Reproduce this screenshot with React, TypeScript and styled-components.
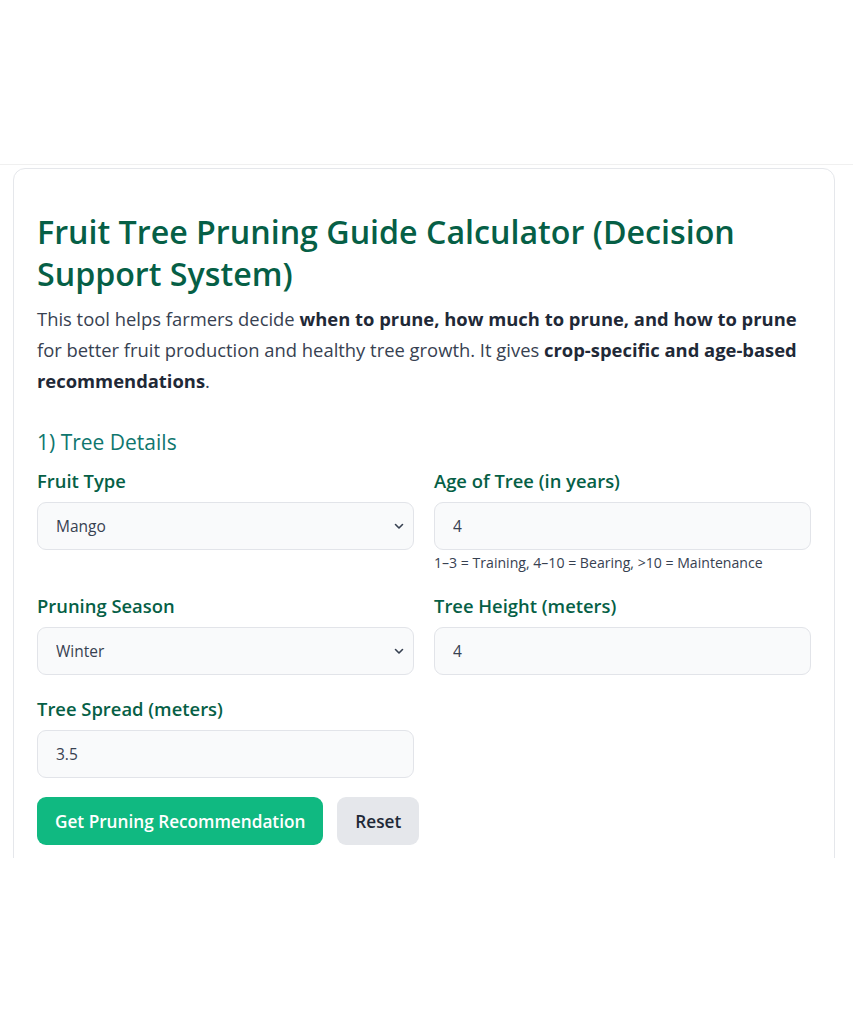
import styled, { createGlobalStyle } from "styled-components";

const GlobalStyle = createGlobalStyle`
  * { box-sizing: border-box; }
  body {
    margin: 0;
    background: #ffffff;
    font-family: "Open Sans", "Noto Sans", Arial, sans-serif;
    color: #374151;
  }
`;

const TopSpace = styled.div`
  height: 164px;
`;

const Frame = styled.div`
  height: 694px;
  overflow: hidden;
  border-top: 1px solid #f0f0f0;
  padding: 3px 18px 0 13px;
`;

const Card = styled.div`
  width: 822px;
  min-height: 760px;
  border: 1px solid #e5e7eb;
  border-radius: 12px;
  padding: 42px 23px 24px;
`;

const Title = styled.h1`
  margin: 0 0 8px;
  font-size: 32.2px;
  line-height: 42px;
  font-weight: 600;
  color: #065f46;
`;

const Intro = styled.p`
  margin: 0 0 31px;
  font-size: 18.4px;
  line-height: 31px;
  color: #374151;

  strong {
    font-weight: 700;
    color: #1f2937;
  }
`;

const SectionTitle = styled.h2`
  margin: 0 0 12px;
  font-size: 21px;
  line-height: 30px;
  font-weight: 400;
  color: #0f766e;
`;

const Grid = styled.div`
  display: grid;
  grid-template-columns: 1fr 1fr;
  column-gap: 20px;
  row-gap: 22px;
`;

const Field = styled.div`
  display: flex;
  flex-direction: column;
`;

const Label = styled.label`
  font-size: 18.4px;
  line-height: 24px;
  font-weight: 600;
  color: #065f46;
  margin-bottom: 9px;
`;

const controlStyles = `
  width: 100%;
  height: 48px;
  border: 1px solid #e2e4e9;
  border-radius: 9px;
  background: #f9fafb;
  font-family: "Open Sans", "Noto Sans", Arial, sans-serif;
  font-size: 15.5px;
  color: #374151;
  padding: 0 18px;
  outline: none;
`;

const Input = styled.input`
  ${controlStyles}
`;

const SelectWrap = styled.div`
  position: relative;
`;

const Select = styled.select`
  ${controlStyles}
  appearance: none;
  padding-right: 36px;
`;

const Chevron = styled.svg`
  position: absolute;
  right: 9px;
  top: 50%;
  transform: translateY(-50%);
  pointer-events: none;
`;

const Hint = styled.small`
  margin-top: 4px;
  font-size: 14.1px;
  line-height: 18px;
  color: #374151;
`;

const Actions = styled.div`
  display: flex;
  gap: 14px;
  margin-top: 19px;
`;

const Button = styled.button<{ $variant?: "primary" | "secondary" }>`
  height: 48px;
  padding: 0 18px;
  border: none;
  border-radius: 9px;
  font-family: "Open Sans", "Noto Sans", Arial, sans-serif;
  font-size: 17.2px;
  font-weight: 600;
  cursor: pointer;
  background: ${(p) => (p.$variant === "secondary" ? "#e5e7eb" : "#10b981")};
  color: ${(p) => (p.$variant === "secondary" ? "#1f2937" : "#ffffff")};
`;

const ChevronIcon = () => (
  <Chevron width="12" height="12" viewBox="0 0 12 12">
    <path d="M2.5 4.5 L6 8 L9.5 4.5" fill="none" stroke="#374151" strokeWidth="1.6" strokeLinecap="round" strokeLinejoin="round" />
  </Chevron>
);

export default function App() {
  return (
    <>
      <GlobalStyle />
      <TopSpace />
      <Frame>
        <Card>
          <Title>Fruit Tree Pruning Guide Calculator (Decision Support System)</Title>
          <Intro>
            This tool helps farmers decide <strong>when to prune, how much to prune, and how to prune</strong> for
            better fruit production and healthy tree growth. It gives <strong>crop-specific and age-based
            recommendations</strong>.
          </Intro>
          <SectionTitle>1) Tree Details</SectionTitle>
          <Grid>
            <Field>
              <Label>Fruit Type</Label>
              <SelectWrap>
                <Select defaultValue="Mango">
                  <option>Mango</option>
                  <option>Apple</option>
                  <option>Guava</option>
                  <option>Citrus</option>
                </Select>
                <ChevronIcon />
              </SelectWrap>
            </Field>
            <Field>
              <Label>Age of Tree (in years)</Label>
              <Input type="text" defaultValue="4" />
              <Hint>1–3 = Training, 4–10 = Bearing, &gt;10 = Maintenance</Hint>
            </Field>
            <Field>
              <Label>Pruning Season</Label>
              <SelectWrap>
                <Select defaultValue="Winter">
                  <option>Winter</option>
                  <option>Summer</option>
                  <option>Monsoon</option>
                </Select>
                <ChevronIcon />
              </SelectWrap>
            </Field>
            <Field>
              <Label>Tree Height (meters)</Label>
              <Input type="text" defaultValue="4" />
            </Field>
            <Field>
              <Label>Tree Spread (meters)</Label>
              <Input type="text" defaultValue="3.5" />
            </Field>
          </Grid>
          <Actions>
            <Button>Get Pruning Recommendation</Button>
            <Button $variant="secondary">Reset</Button>
          </Actions>
        </Card>
      </Frame>
    </>
  );
}
